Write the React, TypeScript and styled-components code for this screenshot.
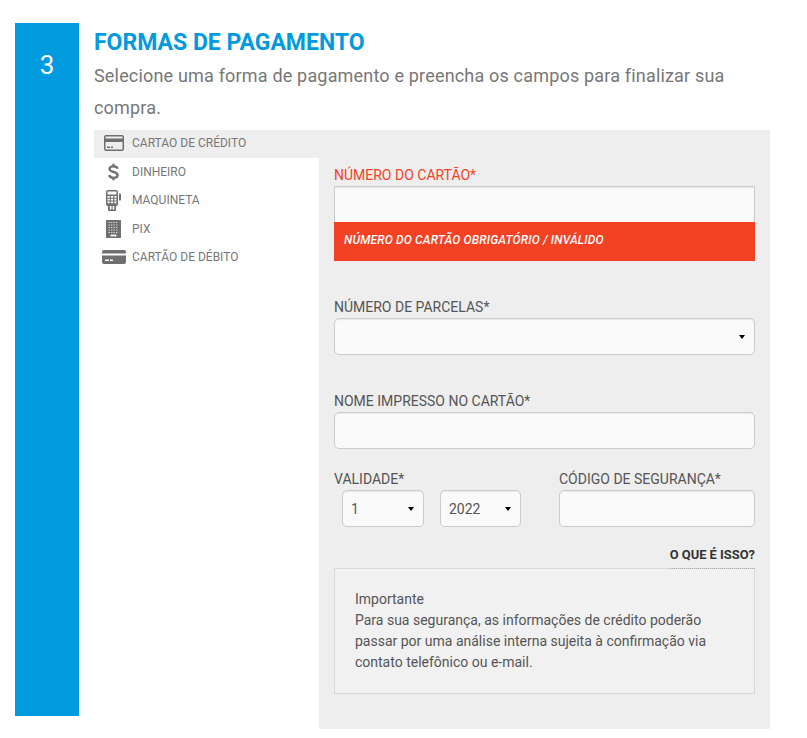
import React from "react";
import styled, { createGlobalStyle } from "styled-components";

const Global = createGlobalStyle`
  html, body { margin: 0; padding: 0; background: #fff; }
  body { font-family: Roboto, "Liberation Sans", sans-serif; }
  * { box-sizing: border-box; }
`;

const Page = styled.div`
  display: flex;
  width: 807px;
  height: 738px;
  padding: 23px 0 0 15px;
  overflow: hidden;
`;
const Step = styled.div`
  width: 64px;
  height: 693px;
  background: #009ade;
  color: #fff;
  font-size: 26px;
  line-height: 30px;
  text-align: center;
  padding-top: 27px;
  flex: none;
`;
const Main = styled.div`
  width: 676px;
  margin-left: 15px;
  flex: none;
`;
const Title = styled.h2`
  margin: 6px 0 0;
  font-size: 23px;
  line-height: 27px;
  font-weight: 700;
  color: #009ade;
`;
const Lead = styled.p`
  margin: 4px 0 0;
  font-size: 18px;
  line-height: 32px;
  color: #777;
  width: 660px;
  letter-spacing: 0.18px;
`;
const Body = styled.div`
  display: flex;
  margin-top: 6px;
`;
const Menu = styled.ul`
  list-style: none;
  margin: 0;
  padding: 0;
  width: 225px;
  flex: none;
`;
const MenuItem = styled.li<{ $active?: boolean }>`
  display: flex;
  align-items: center;
  height: ${(p) => (p.$active ? 28 : 28.6)}px;
  padding-bottom: ${(p) => (p.$active ? 2 : 1.4)}px;
  background: ${(p) => (p.$active ? "#eee" : "transparent")};
  font-size: 12px;
  color: #777;
`;
const IconSlot = styled.span`
  width: 38px;
  padding-left: 1px;
  display: flex;
  justify-content: center;
  flex: none;
  color: #6f6f6f;
`;
const Panel = styled.div`
  width: 451px;
  height: 599px;
  background: #eee;
  padding: 35px 15px 0;
`;
const Label = styled.label<{ $error?: boolean }>`
  display: block;
  font-size: 14px;
  line-height: 20px;
  color: ${(p) => (p.$error ? "#f44225" : "#555")};
`;
const ErrInput = styled.div`
  height: 36px;
  margin-top: 1px;
  background: #fafafa;
  border: 1px solid #ccc;
  border-bottom: 0;
  box-shadow: inset 0 1px 1px rgba(0, 0, 0, 0.075);
`;
const ErrorBar = styled.div`
  height: 39px;
  background: #f34123;
  color: #fff;
  font-size: 12px;
  font-style: italic;
  font-weight: 500;
  letter-spacing: 0.16px;
  line-height: 36px;
  padding: 0 10px;
`;
const Field = styled.div<{ $top: number; $gap?: number }>`
  margin-top: ${(p) => p.$top}px;
  display: flex;
  flex-direction: column;
  gap: ${(p) => p.$gap ?? 0}px;
`;
const Control = styled.div<{ $w?: number }>`
  display: flex;
  align-items: center;
  justify-content: space-between;
  height: 37px;
  width: ${(p) => (p.$w ? `${p.$w}px` : "100%")};
  background: #fafafa;
  border: 1px solid #ccc;
  border-radius: 5px;
  box-shadow: inset 0 1px 1px rgba(0, 0, 0, 0.075);
  padding: 0 9px 0 8px;
  font-size: 14px;
  color: #555;
`;
const Caret = styled.span`
  width: 0;
  height: 0;
  border-top: 4px solid #000;
  border-left: 3px solid transparent;
  border-right: 3px solid transparent;
`;
const Row = styled.div`
  display: flex;
  margin-top: 20px;
`;
const Validity = styled.div`
  width: 225px;
  flex: none;
  display: flex;
  flex-direction: column;
  gap: 1px;
`;
const Selects = styled.div`
  display: flex;
  gap: 16px;
  padding-left: 8px;
`;
const Security = styled.div`
  flex: 1;
  display: flex;
  flex-direction: column;
  gap: 1px;
`;
const HelpRow = styled.div`
  display: flex;
  justify-content: flex-end;
  margin-top: 12px;
`;
const Help = styled.span`
  font-size: 12.9px;
  line-height: 31px;
  height: 30px;
  font-weight: 700;
  color: #333;
  border-bottom: 1px dotted #aaa;
`;
const Notice = styled.div`
  height: 126px;
  margin-top: -1px;
  border: 1px solid #d8d8d8;
  background: #f1f1f1;
  padding: 20px 20px 0;
  font-size: 14px;
  line-height: 21px;
  color: #555;
`;

const CardIcon = () => (
  <svg width="20" height="16" viewBox="0 0 20 16">
    <path fill="currentColor" fillRule="evenodd" d="M2 0h16a2 2 0 0 1 2 2v12a2 2 0 0 1-2 2H2a2 2 0 0 1-2-2V2a2 2 0 0 1 2-2zM1.500 3v.5h17V2a.5.5 0 0 0-.5-.5H2a.5.5 0 0 0-.5.5zm0 4V14a.5.5 0 0 0 .5.5h16a.5.5 0 0 0 .5-.5V7zM3 11.500h3V13H3zm4 0h2V13H7z" />
  </svg>
);
const DollarIcon = () => (
  <svg width="11" height="18" viewBox="0 0 12 18">
    <path fill="none" stroke="currentColor" strokeWidth="2.500" d="M10.500 5.400C10 3.500 8.300 2.800 6 2.800 3.500 2.800 1.700 3.800 1.700 5.600c0 4 8.800 2.500 8.800 6.900 0 1.900-2 2.800-4.500 2.800-2.600 0-4.300-.9-4.800-2.900M6 0v3M6 15v3" />
  </svg>
);
const TerminalIcon = () => (
  <svg width="15" height="21" viewBox="0 0 15 21">
    <path fill="currentColor" fillRule="evenodd" d="M2 0h8a2 2 0 0 1 2 2v12a2 2 0 0 1-2 2v4a1 1 0 0 1-1 1H3a1 1 0 0 1-1-1v-4a2 2 0 0 1-2-2V2a2 2 0 0 1 2-2zM1.500 1.500V4.500h9V1.500zm0 4.500v1.700h2.300V6zm3.400 0v1.700h2.300V6zm3.400 0v1.700h2.200V6zM1.500 8.800v1.700h2.300V8.800zm3.400 0v1.700h2.300V8.800zm3.400 0v1.700h2.200V8.800zM1.500 11.600v1.700h2.300v-1.700zm3.400 0v1.700h2.300v-1.700zm3.400 0v1.700h2.200v-1.700zM3.800 16v3.500h1.700V16zm2.800 0v3.500h1.700V16z" />
    <path fill="currentColor" d="M13 3.500h1.200a.8.8 0 0 1 .8.800v5.400a.8.8 0 0 1-.8.800H13z" />
  </svg>
);
const GridIcon = () => (
  <svg width="15" height="18" viewBox="0 0 15 18">
    <rect width="15" height="18" rx="0.5" fill="currentColor" />
    <path stroke="#dcdcdc" strokeWidth="1.200" strokeDasharray="1.400 1.100" d="M2.500 2.500h10M2.500 5h10M2.500 7.500h10M2.500 10h10M2.500 12.500h10" />
    <rect x="4.500" y="14.500" width="6" height="2" fill="#eee" />
  </svg>
);
const DebitIcon = () => (
  <svg width="24" height="14" viewBox="0 0 24 14">
    <path fill="currentColor" d="M2 0h20a2 2 0 0 1 2 2v1.500H0V2a2 2 0 0 1 2-2zM0 5.500h24V12a2 2 0 0 1-2 2H2a2 2 0 0 1-2-2zM3 9.500V11h4V9.500zm5 0V11h3V9.500z" />
  </svg>
);

const items = [
  { label: "CARTAO DE CRÉDITO", icon: <CardIcon /> },
  { label: "DINHEIRO", icon: <DollarIcon /> },
  { label: "MAQUINETA", icon: <TerminalIcon /> },
  { label: "PIX", icon: <GridIcon /> },
  { label: "CARTÃO DE DÉBITO", icon: <DebitIcon /> },
];

export default function App() {
  return (
    <Page>
      <Global />
      <Step>3</Step>
      <Main>
        <Title>FORMAS DE PAGAMENTO</Title>
        <Lead>Selecione uma forma de pagamento e preencha os campos para finalizar sua compra.</Lead>
        <Body>
          <Menu>
            {items.map((it, i) => (
              <MenuItem key={it.label} $active={i === 0}>
                <IconSlot>{it.icon}</IconSlot>
                {it.label}
              </MenuItem>
            ))}
          </Menu>
          <Panel>
            <Label $error>NÚMERO DO CARTÃO*</Label>
            <ErrInput />
            <ErrorBar>NÚMERO DO CARTÃO OBRIGATÓRIO / INVÁLIDO</ErrorBar>
            <Field $top={36} $gap={1}>
              <Label>NÚMERO DE PARCELAS*</Label>
              <Control><span /><Caret /></Control>
            </Field>
            <Field $top={36} $gap={1}>
              <Label>NOME IMPRESSO NO CARTÃO*</Label>
              <Control />
            </Field>
            <Row>
              <Validity>
                <Label>VALIDADE*</Label>
                <Selects>
                  <Control $w={82}>1<Caret /></Control>
                  <Control $w={81}>2022<Caret /></Control>
                </Selects>
              </Validity>
              <Security>
                <Label>CÓDIGO DE SEGURANÇA*</Label>
                <Control />
              </Security>
            </Row>
            <HelpRow><Help>O QUE É ISSO?</Help></HelpRow>
            <Notice>
              Importante<br />
              Para sua segurança, as informações de crédito poderão<br />
              passar por uma análise interna sujeita à confirmação via<br />
              contato telefônico ou e-mail.
            </Notice>
          </Panel>
        </Body>
      </Main>
    </Page>
  );
}
